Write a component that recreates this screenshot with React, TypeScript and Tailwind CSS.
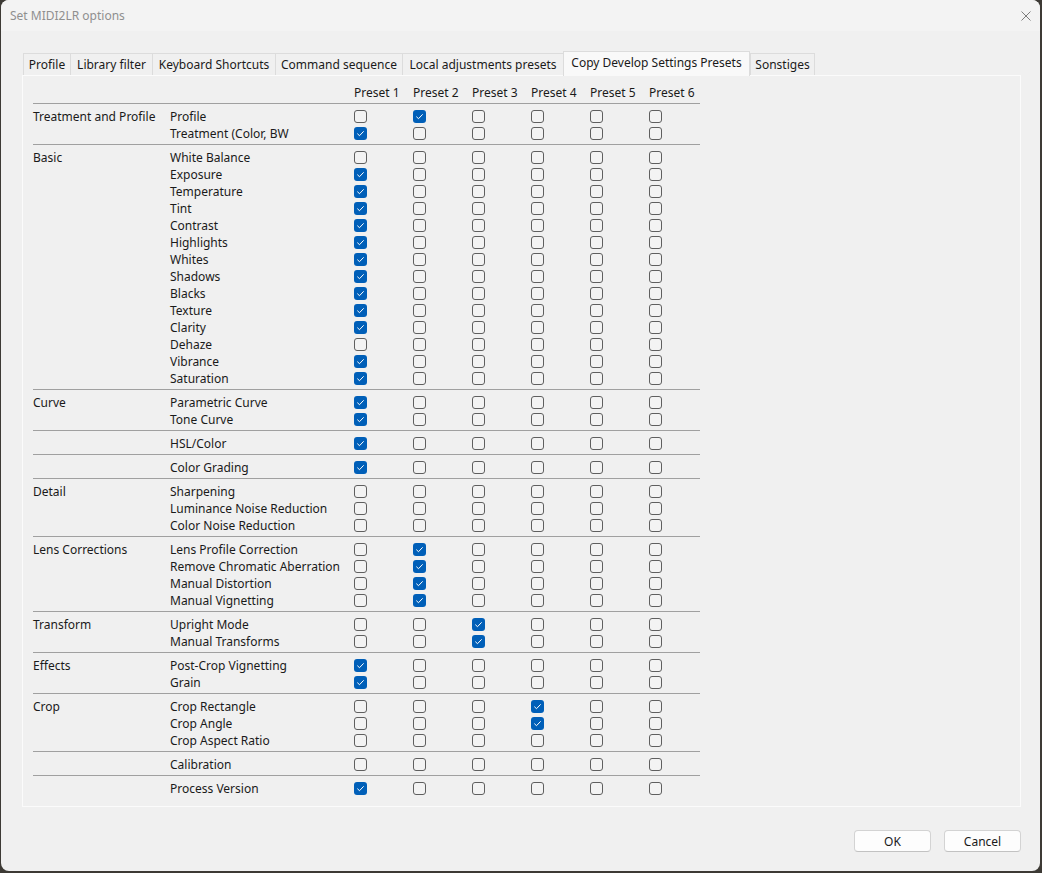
import React from "react";

const tabs: { label: string; w: string; active?: boolean }[] = [
  { label: "Profile", w: "w-[47px]" },
  { label: "Library filter", w: "w-[82px]" },
  { label: "Keyboard Shortcuts", w: "w-[123px]" },
  { label: "Command sequence", w: "w-[127px]" },
  { label: "Local adjustments presets", w: "w-[161px]" },
  { label: "Copy Develop Settings Presets", w: "w-[187px]", active: true },
  { label: "Sonstiges", w: "w-[65px]" },
];

// second value = which preset (1-6) is ticked, 0 = none
const groups: { name: string; items: [string, number][] }[] = [
  {
    name: "Treatment and Profile",
    items: [
      ["Profile", 2],
      ["Treatment (Color, BW", 1],
    ],
  },
  {
    name: "Basic",
    items: [
      ["White Balance", 0],
      ["Exposure", 1],
      ["Temperature", 1],
      ["Tint", 1],
      ["Contrast", 1],
      ["Highlights", 1],
      ["Whites", 1],
      ["Shadows", 1],
      ["Blacks", 1],
      ["Texture", 1],
      ["Clarity", 1],
      ["Dehaze", 0],
      ["Vibrance", 1],
      ["Saturation", 1],
    ],
  },
  {
    name: "Curve",
    items: [
      ["Parametric Curve", 1],
      ["Tone Curve", 1],
    ],
  },
  { name: "", items: [["HSL/Color", 1]] },
  { name: "", items: [["Color Grading", 1]] },
  {
    name: "Detail",
    items: [
      ["Sharpening", 0],
      ["Luminance Noise Reduction", 0],
      ["Color Noise Reduction", 0],
    ],
  },
  {
    name: "Lens Corrections",
    items: [
      ["Lens Profile Correction", 2],
      ["Remove Chromatic Aberration", 2],
      ["Manual Distortion", 2],
      ["Manual Vignetting", 2],
    ],
  },
  {
    name: "Transform",
    items: [
      ["Upright Mode", 3],
      ["Manual Transforms", 3],
    ],
  },
  {
    name: "Effects",
    items: [
      ["Post-Crop Vignetting", 1],
      ["Grain", 1],
    ],
  },
  {
    name: "Crop",
    items: [
      ["Crop Rectangle", 4],
      ["Crop Angle", 4],
      ["Crop Aspect Ratio", 0],
    ],
  },
  { name: "", items: [["Calibration", 0]] },
  { name: "", items: [["Process Version", 1]] },
];

const presets = [1, 2, 3, 4, 5, 6];
const cols =
  "grid grid-cols-[137px_184px_59px_59px_59px_59px_59px_51px] h-[17px] items-center";

function Checkbox({ checked }: { checked: boolean }) {
  if (checked) {
    return (
      <div className="w-[13px] h-[13px] rounded-[3px] bg-[#005fb8] flex items-center justify-center">
        <svg width="13" height="13" viewBox="0 0 13 13" fill="none">
          <path
            d="M3.6 6.9 L5.5 8.7 L9.4 4.6"
            stroke="#ffffff"
            strokeWidth="1"
            strokeLinecap="round"
            strokeLinejoin="round"
          />
        </svg>
      </div>
    );
  }
  return (
    <div className="w-[13px] h-[13px] rounded-[3px] border border-[#5f5f5f] bg-[#f3f3f3]" />
  );
}

export default function App() {
  return (
    <div
      className="w-[1042px] h-[873px] bg-[#3d3a35] pl-[1px] text-[12px] text-[#1a1a1a]"
      style={{ fontFamily: '"Noto Sans", "Liberation Sans", sans-serif' }}
    >
      <div className="w-[1039px] h-[871px] rounded-[8px] overflow-hidden bg-[#f0f0f0] flex flex-col">
        <div className="h-[31px] bg-[#f3f3f3] flex items-center justify-between pl-[9px] pr-[9px] shrink-0">
          <span className="text-[#8f8f8f]">Set MIDI2LR options</span>
          <svg width="10" height="10" viewBox="0 0 10 10">
            <path d="M0.5 0.5 L9.5 9.5 M9.5 0.5 L0.5 9.5" stroke="#7d7d7d" strokeWidth="1" />
          </svg>
        </div>

        <div className="pl-[21px] pt-[20px]">
          <div className="flex items-end h-[24px] pl-[1px]">
            {tabs.map((t, i) => (
              <div
                key={t.label}
                className={
                  t.active
                    ? `${t.w} h-[25px] -mb-px relative z-10 bg-[#f9f9f9] border border-b-0 border-[#dcdcdc] flex items-center justify-center pb-[3px]`
                    : `${t.w} h-[22px] border-t border-l border-[#dcdcdc] flex items-center justify-center ${
                        i === tabs.length - 1 ? "border-r" : ""
                      }`
                }
              >
                {t.label}
              </div>
            ))}
          </div>

          <div className="w-[999px] h-[732px] border border-[#fbfbfb] pl-[10px] pt-[8px]">
            <div className="pb-[2px] border-b border-[#a0a0a0] w-[667px]">
              <div className={cols}>
                <span />
                <span />
                {presets.map((p) => (
                  <span key={p}>Preset {p}</span>
                ))}
              </div>
            </div>
            {groups.map((g, gi) => (
              <div
                key={gi}
                className={`w-[667px] pt-[4px] pb-[2px] ${
                  gi < groups.length - 1 ? "border-b border-[#a0a0a0]" : ""
                }`}
              >
                {g.items.map(([label, on], ii) => (
                  <div key={label} className={cols}>
                    <span>{ii === 0 ? g.name : ""}</span>
                    <span>{label}</span>
                    {presets.map((p) => (
                      <div key={p} className="mb-[2px]">
                        <Checkbox checked={on === p} />
                      </div>
                    ))}
                  </div>
                ))}
              </div>
            ))}
          </div>

          <div className="w-[999px] flex justify-end gap-[13px] mt-[23px]">
            <button className="w-[77px] h-[22px] rounded-[4px] border border-[#d3d3d3] border-b-[#c2c2c2] bg-[#fdfdfd] pt-px">
              OK
            </button>
            <button className="w-[77px] h-[22px] rounded-[4px] border border-[#d3d3d3] border-b-[#c2c2c2] bg-[#fdfdfd] pt-px">
              Cancel
            </button>
          </div>
        </div>
      </div>
    </div>
  );
}
